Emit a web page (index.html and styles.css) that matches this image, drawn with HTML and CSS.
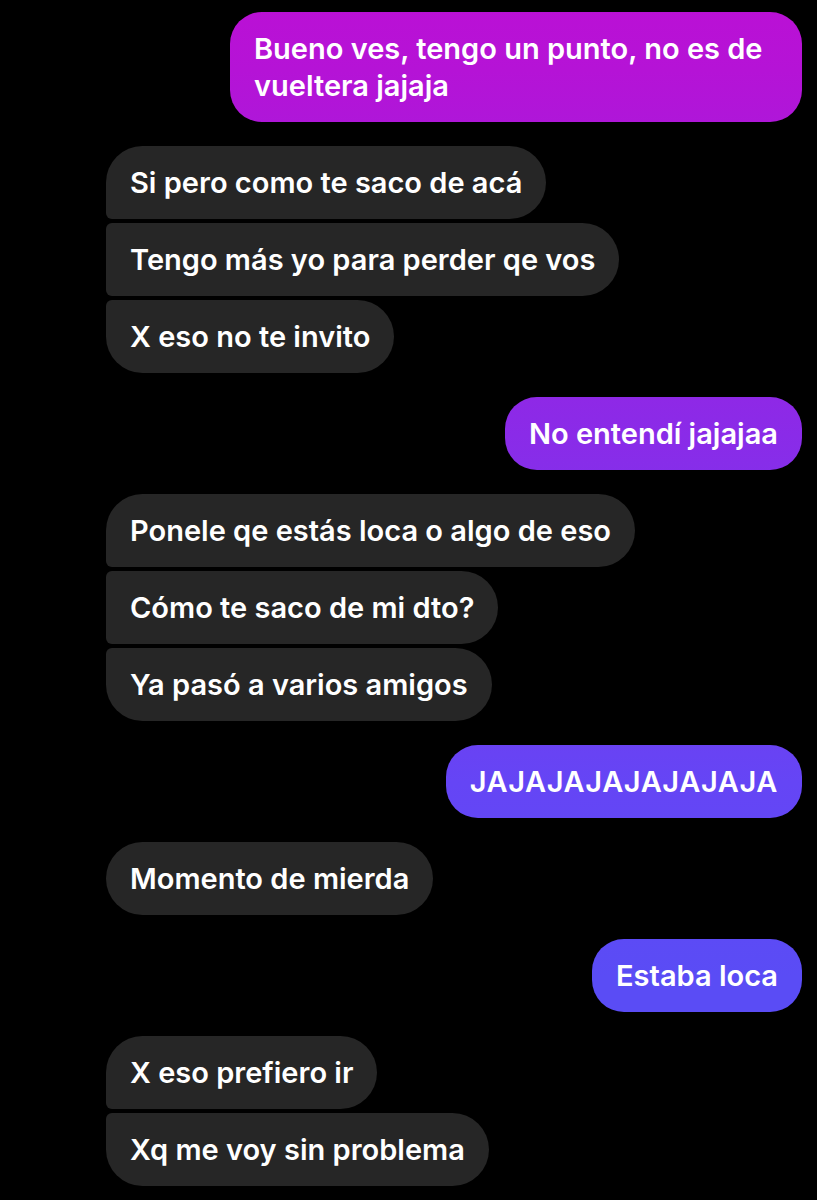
FILE: index.html
```html
<!DOCTYPE html>
<html lang="es">

<head>
    <meta charset="UTF-8">
    <meta name="viewport" content="width=device-width, initial-scale=1.0">
    <title>Chat</title>
    <link rel="stylesheet" href="styles.css">
</head>

<body>
    <div class="thread">

        <div class="group out">
            <div class="msg">Bueno ves, tengo un punto, no es de vueltera jajaja</div>
        </div>

        <div class="group in">
            <div class="msg">Si pero como te saco de acá</div>
            <div class="msg">Tengo más yo para perder qe vos</div>
            <div class="msg">X eso no te invito</div>
        </div>

        <div class="group out">
            <div class="msg">No entendí jajajaa</div>
        </div>

        <div class="group in">
            <div class="msg">Ponele qe estás loca o algo de eso</div>
            <div class="msg">Cómo te saco de mi dto?</div>
            <div class="msg">Ya pasó a varios amigos</div>
        </div>

        <div class="group out">
            <div class="msg caps">JAJAJAJAJAJAJAJA</div>
        </div>

        <div class="group in">
            <div class="msg">Momento de mierda</div>
        </div>

        <div class="group out">
            <div class="msg">Estaba loca</div>
        </div>

        <div class="group in">
            <div class="msg">X eso prefiero ir</div>
            <div class="msg">Xq me voy sin problema</div>
        </div>

    </div>
</body>

</html>
```

FILE: styles.css
```css
body {
    margin: 0;
    background: #000;
    font-family: Inter, Roboto, "Noto Sans", Arial, sans-serif;
    color: #fff;
}

.thread {
    display: flex;
    flex-direction: column;
    gap: 24px;
    padding: 12px 15px 12px 106px;
}

.group {
    display: flex;
    flex-direction: column;
    gap: 4px;
}

.group.out {
    align-items: flex-end;
}

.group.in {
    align-items: flex-start;
}

.msg {
    font-size: 29px;
    font-weight: 600;
    line-height: 37px;
    padding: 18px 24px;
    border-radius: 37px;
    max-width: 524px;
}

/* outgoing bubbles share one gradient fixed to the screen */
.out .msg {
    background: linear-gradient(180deg, #bb10d5 0px, #b513d6 70px, #8a2be8 435px, #6545f5 782px, #5a4cf5 976px, #5a4cf5 1200px) fixed;
    border-radius: 32px;
}

.in .msg {
    background: #262626;
}

.in .msg:not(:last-child) {
    border-bottom-left-radius: 6px;
}

.in .msg:not(:first-child) {
    border-top-left-radius: 6px;
}

.caps {
    letter-spacing: 0.6px;
}
```
